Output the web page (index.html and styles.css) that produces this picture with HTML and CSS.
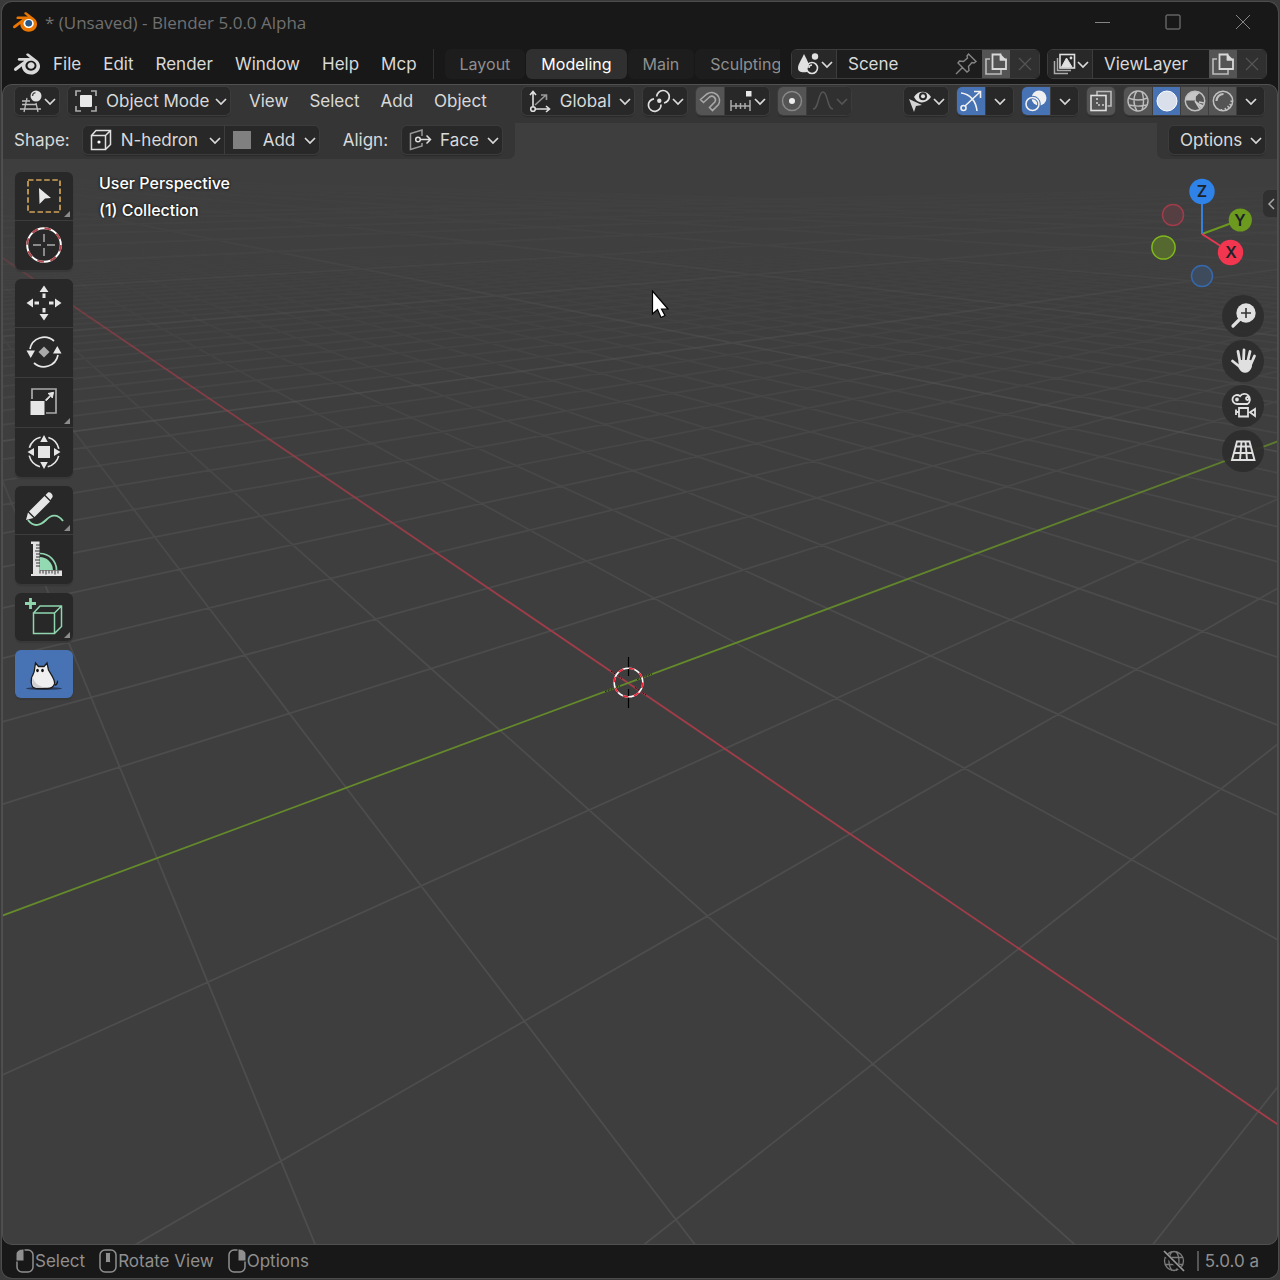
FILE: index.html
```html
<!DOCTYPE html>
<html lang="en">
<head>
    <meta charset="UTF-8">
    <meta name="viewport" content="width=device-width, initial-scale=1.0">
    <title>* (Unsaved) - Blender 5.0.0 Alpha</title>
    <link rel="stylesheet" href="styles.css">
</head>
<body>
    <!-- shared shapes -->
    <svg class="defs" aria-hidden="true">
        <symbol id="chevron" viewBox="0 0 14 14"><path d="M2 5l5 5 5-5" fill="none" stroke="currentColor" stroke-width="1.7"/></symbol>
        <symbol id="close" viewBox="0 0 14 14"><path d="M1 1l12 12M13 1L1 13" fill="none" stroke="currentColor" stroke-width="1.2"/></symbol>
        <symbol id="copy" viewBox="0 0 24 24">
            <path d="M6 7H2v15h15v-4" fill="none" stroke="#bbb" stroke-width="1.6"/>
            <path d="M8.5 2.5h8v5H22V17H8.5z" fill="none" stroke="currentColor" stroke-width="1.8"/>
            <path d="M16 1.5l7 7h-7z" fill="currentColor"/>
        </symbol>
        <symbol id="logo" viewBox="0 0 24 24"><path fill="currentColor" d="M12.51 13.214c.046-.8.438-1.506 1.03-2.006a3.424 3.424 0 0 1 2.212-.79c.85 0 1.631.3 2.211.79.592.5.983 1.206 1.028 2.005.045.823-.285 1.586-.865 2.153a3.389 3.389 0 0 1-2.374.938 3.393 3.393 0 0 1-2.376-.938c-.58-.567-.91-1.33-.865-2.152M7.35 14.831c.006.314.106.922.256 1.398a7.372 7.372 0 0 0 1.593 2.757 8.227 8.227 0 0 0 2.787 2.001 8.947 8.947 0 0 0 3.66.76 8.964 8.964 0 0 0 3.657-.772 8.285 8.285 0 0 0 2.785-2.01 7.428 7.428 0 0 0 1.592-2.762 6.964 6.964 0 0 0 .25-3.074 7.123 7.123 0 0 0-1.016-2.779 7.764 7.764 0 0 0-1.852-2.043h.002L13.566 2.55l-.02-.015c-.492-.378-1.319-.376-1.86.002-.547.382-.609 1.015-.123 1.415l-.001.001 3.126 2.543-9.53.01h-.013c-.788.001-1.545.518-1.695 1.172-.154.665.38 1.217 1.2 1.22V8.9l4.83-.01-8.62 6.617-.034.025c-.813.622-1.075 1.658-.563 2.315.52.667 1.625.668 2.447.004L7.414 14s-.069.52-.063.831zm12.09 1.741c-.97.988-2.326 1.548-3.795 1.55-1.47.004-2.827-.552-3.797-1.538a4.51 4.51 0 0 1-1.036-1.622 4.282 4.282 0 0 1 .282-3.519 4.702 4.702 0 0 1 1.153-1.371c.942-.768 2.141-1.183 3.396-1.185 1.256-.002 2.455.41 3.398 1.175.48.391.87.854 1.152 1.367a4.28 4.28 0 0 1 .522 1.706 4.236 4.236 0 0 1-.239 1.811 4.54 4.54 0 0 1-1.035 1.626z"/></symbol>
    </svg>

    <div class="window">
        <header class="titlebar">
            <svg class="icon app-icon" viewBox="0 0 24 24"><circle cx="15.7" cy="13.2" r="6" fill="#fff"/><use href="#logo"/><circle cx="15.7" cy="13.3" r="3.3" fill="#265787"/></svg>
            <h1>* (Unsaved) - Blender 5.0.0 Alpha</h1>
            <div class="win-buttons">
                <button type="button" aria-label="Minimize"><svg viewBox="0 0 16 16"><path d="M0 8.5h15"/></svg></button>
                <button type="button" aria-label="Maximize"><svg viewBox="0 0 16 16"><rect x="1" y="1" width="14" height="14" rx="1"/></svg></button>
                <button type="button" aria-label="Close"><svg viewBox="0 0 16 16"><path d="M1 1l14 14M15 1L1 15"/></svg></button>
            </div>
        </header>

        <div class="topbar">
            <nav class="menus">
                <button type="button" class="logo-button" aria-label="Blender"><svg class="logo"><use href="#logo"/></svg></button>
                <button type="button">File</button>
                <button type="button">Edit</button>
                <button type="button">Render</button>
                <button type="button">Window</button>
                <button type="button">Help</button>
                <button type="button">Mcp</button>
            </nav>
            <div class="tabs">
                <button type="button">Layout</button>
                <button type="button" class="active">Modeling</button>
                <button type="button">Main</button>
                <button type="button">Sculpting</button>
            </div>
            <div class="datablock scene">
                <button type="button" class="drop" aria-label="Browse scene">
                    <svg class="icon" viewBox="0 0 24 24"><path d="M8 2c2 4 5 9 5 12-2 2-2 4-2 6-5 1-9 0-9-4 0-4 4-9 6-14z" fill="#e0e0e0"/><circle cx="19" cy="4.5" r="3.2" fill="#e0e0e0"/><circle cx="16" cy="16" r="5.5" fill="none" stroke="#e0e0e0" stroke-width="1.6"/><path d="M13 16a3 3 0 0 1 3-3" fill="none" stroke="#e0e0e0" stroke-width="1.5"/></svg>
                    <svg class="chev"><use href="#chevron"/></svg>
                </button>
                <input type="text" value="Scene" aria-label="Scene name">
                <button type="button" class="pin" aria-label="Pin scene"><svg class="icon" viewBox="0 0 24 24" fill="none" stroke="#858585" stroke-width="1.4"><path d="M2 22l7-7M14.500 2l7.500 7.500-2 1.500-2-.5-3.500 4 .5 4-2 1.500L4 11l1.500-2 4 .5L13.500 6 13 4z"/></svg></button>
                <button type="button" class="sq" aria-label="New scene"><svg class="icon"><use href="#copy"/></svg></button>
                <button type="button" class="sq off" aria-label="Unlink scene"><svg class="chev"><use href="#close"/></svg></button>
            </div>
            <div class="datablock layer">
                <button type="button" class="drop" aria-label="Browse view layer">
                    <svg class="icon" viewBox="0 0 24 24" fill="none" stroke="#e0e0e0"><path d="M2.500 9v12.500H16M5.500 6v12.500H19" stroke="#aaa" stroke-width="1.5"/><rect x="8" y="2.5" width="14.5" height="13.5" stroke-width="1.6"/><path d="M9.500 15l5-9 5.500 9z" fill="#e0e0e0"/><circle cx="19" cy="6" r="1.4" fill="#e0e0e0" stroke="none"/></svg>
                    <svg class="chev"><use href="#chevron"/></svg>
                </button>
                <input type="text" value="ViewLayer" aria-label="View layer name">
                <button type="button" class="sq" aria-label="New view layer"><svg class="icon"><use href="#copy"/></svg></button>
                <button type="button" class="sq off" aria-label="Remove view layer"><svg class="chev"><use href="#close"/></svg></button>
            </div>
        </div>

        <main class="editor">
            <svg class="scene-view" id="sceneView" viewBox="2 84 1276 1161" preserveAspectRatio="xMidYMid slice" aria-label="3D viewport">
                <defs>
                    <linearGradient id="minorFade" gradientUnits="userSpaceOnUse" x1="0" y1="172" x2="0" y2="900">
                        <stop offset="0" stop-color="#505050" stop-opacity="0"/>
                        <stop offset=".1" stop-color="#505050" stop-opacity=".06"/>
                        <stop offset=".3" stop-color="#505050" stop-opacity=".4"/>
                        <stop offset=".6" stop-color="#505050" stop-opacity=".75"/>
                        <stop offset="1" stop-color="#505050" stop-opacity=".85"/>
                    </linearGradient>
                    <linearGradient id="majorFade" gradientUnits="userSpaceOnUse" x1="0" y1="172" x2="0" y2="500">
                        <stop offset="0" stop-color="#545454" stop-opacity="0"/>
                        <stop offset=".4" stop-color="#545454" stop-opacity=".35"/>
                        <stop offset="1" stop-color="#545454" stop-opacity=".8"/>
                    </linearGradient>
                    <linearGradient id="xFade" gradientUnits="userSpaceOnUse" x1="0" y1="220" x2="0" y2="640">
                        <stop offset="0" stop-color="#a33c49" stop-opacity=".1"/>
                        <stop offset=".3" stop-color="#a33c49" stop-opacity=".65"/>
                        <stop offset="1" stop-color="#a33c49"/>
                    </linearGradient>
                    <linearGradient id="yFade" gradientUnits="userSpaceOnUse" x1="0" y1="400" x2="0" y2="640">
                        <stop offset="0" stop-color="#648a2a" stop-opacity=".75"/>
                        <stop offset="1" stop-color="#648a2a"/>
                    </linearGradient>
                </defs>
                <path id="minorLines" fill="none" stroke="url(#minorFade)" stroke-width="1.7"/>
                <path id="majorLines" fill="none" stroke="url(#majorFade)" stroke-width="1.7"/>
                <path id="xAxis" fill="none" stroke="url(#xFade)" stroke-width="1.8"/>
                <path id="yAxis" fill="none" stroke="url(#yFade)" stroke-width="1.8"/>
                <!-- 3D cursor -->
                <g fill="none">
                    <path d="M628.500 657v19M628.500 689v19" stroke="#000" stroke-width="1.2"/>
                    <path d="M611 671l11 7.500M635 687.500l11 7.500M605 691.500l15-5.600M637 679.500l15-5.600" stroke="#111" stroke-dasharray="2 1"/>
                    <circle cx="628.5" cy="682.5" r="14.3" stroke="#fff" stroke-width="1.6"/>
                    <circle cx="628.5" cy="682.5" r="14.3" stroke="#ee2336" stroke-width="1.6" stroke-dasharray="5.6 5.63"/>
                </g>
            </svg>

            <div class="header-row">
                <button type="button" class="ctl drop" aria-label="Editor type">
                    <svg class="icon" viewBox="0 0 24 24"><path d="M3 12h8M1 20h21M8 9L5 23M17 14l2 9M3 15.500h15" fill="none" stroke="#bdbdbd" stroke-width="1.3"/><circle cx="17" cy="7" r="5.5" fill="#e0e0e0"/><path d="M13.500 7a3.500 3.500 0 0 1 3-3.300" fill="none" stroke="#444" stroke-width="1.3"/></svg>
                    <svg class="chev"><use href="#chevron"/></svg>
                </button>
                <label class="ctl field w-mode">
                    <svg class="icon" viewBox="0 0 24 24"><path d="M2 7V2h5M17 2h5v5M22 17v5h-5M7 22H2v-5" fill="none" stroke="#aaa" stroke-width="1.7"/><rect x="6" y="6" width="12" height="12" rx="1" fill="#e8e8e8"/></svg>
                    <select aria-label="Mode"><option>Object Mode</option></select>
                    <svg class="chev"><use href="#chevron"/></svg>
                </label>
                <nav class="menus view-menus">
                    <button type="button">View</button>
                    <button type="button">Select</button>
                    <button type="button">Add</button>
                    <button type="button">Object</button>
                </nav>
                <div class="cluster middle">
                    <label class="ctl field w-orient">
                        <svg class="icon" viewBox="0 0 24 24" fill="none" stroke="#e0e0e0" stroke-width="1.6"><path d="M7 16L18 6M13 6h5.500v5" stroke="#999"/><path d="M5 17V3M2 6l3-3.500L8 6M7 20h14M18 17l3.500 3-3.500 3"/><circle cx="5" cy="20" r="2.3"/></svg>
                        <select aria-label="Transform orientation"><option>Global</option></select>
                        <svg class="chev"><use href="#chevron"/></svg>
                    </label>
                    <button type="button" class="ctl drop" aria-label="Pivot point">
                        <svg class="icon" viewBox="0 0 24 24" fill="none" stroke="#e0e0e0" stroke-width="1.7"><path d="M9.700 7.500A6.300 6.300 0 1 1 17 14M14 15.500A6.300 6.300 0 1 1 7 9.800"/><circle cx="12.3" cy="11.8" r="2.2" fill="#e0e0e0" stroke="none"/></svg>
                        <svg class="chev"><use href="#chevron"/></svg>
                    </button>
                    <div class="group">
                        <button type="button" class="sq" aria-label="Snap"><svg class="icon" viewBox="0 0 24 24"><path d="M2.500 10.500L9 5A8 8 0 0 1 20.500 15.500l-6 6-3-3L17 12.700A3.700 3.700 0 0 0 11.500 8l-6 5.500z" fill="none" stroke="#a8a8a8" stroke-width="1.6"/></svg></button>
                        <button type="button" class="drop" aria-label="Snapping">
                            <svg class="icon" viewBox="0 0 24 24"><path d="M2 11v11M21 11v11M2 17h19M7 14v6M11.500 14v6M16 14v6" fill="none" stroke="#aaa" stroke-width="1.5"/><rect x="17" y="2" width="5.5" height="5.5" fill="#e8e8e8"/></svg>
                            <svg class="chev"><use href="#chevron"/></svg>
                        </button>
                    </div>
                    <div class="group">
                        <button type="button" class="sq" aria-label="Proportional editing"><svg class="icon" viewBox="0 0 24 24"><circle cx="12" cy="12" r="9.5" fill="none" stroke="#888" stroke-width="1.5"/><circle cx="12" cy="12" r="3" fill="#eee"/></svg></button>
                        <button type="button" class="drop faded" aria-label="Falloff" disabled>
                            <svg class="icon" viewBox="0 0 24 24"><path d="M2 20c6 0 5-17 10-17s4 17 10 17" fill="none" stroke="currentColor" stroke-width="1.5"/></svg>
                            <svg class="chev"><use href="#chevron"/></svg>
                        </button>
                    </div>
                </div>
                <div class="cluster">
                    <button type="button" class="ctl drop" aria-label="Object visibility">
                        <svg class="icon" viewBox="0 0 24 24"><path d="M6 8c4-7 13-7 17 0-4 6-11 7-15 3z" fill="#e0e0e0"/><circle cx="15" cy="7.3" r="4" fill="#282828"/><circle cx="15" cy="7.3" r="2" fill="#e0e0e0"/><path d="M1 10l13 6-6 1-2 6z" fill="#d2d2d2"/></svg>
                        <svg class="chev"><use href="#chevron"/></svg>
                    </button>
                    <div class="group">
                        <button type="button" class="sq on" aria-label="Show gizmo"><svg class="icon" viewBox="0 0 24 24" fill="none" stroke="#f0f0f0" stroke-width="1.6"><path d="M2 4c9 1 15 8 16 18M6 17L21 3M15 2.500h6.500V9"/><circle cx="4.5" cy="19" r="2.5"/></svg></button>
                        <button type="button" class="sq dark" aria-label="Gizmos"><svg class="chev"><use href="#chevron"/></svg></button>
                    </div>
                    <div class="group">
                        <button type="button" class="sq on" aria-label="Show overlays"><svg class="icon" viewBox="0 0 24 24"><circle cx="15" cy="9" r="7.5" fill="#f0f0f0"/><circle cx="8.5" cy="15" r="6.5" fill="none" stroke="#4772b3" stroke-width="3.5"/><circle cx="8.5" cy="15" r="6.5" fill="none" stroke="#f0f0f0" stroke-width="1.6"/></svg></button>
                        <button type="button" class="sq dark" aria-label="Overlays"><svg class="chev"><use href="#chevron"/></svg></button>
                    </div>
                    <button type="button" class="ctl sq" aria-label="Toggle X-Ray"><svg class="icon" viewBox="0 0 24 24" fill="none" stroke="#e0e0e0" stroke-width="1.6"><path d="M8 6V2.500h14V17h-3.500" stroke="#bbb"/><rect x="2" y="6.5" width="15" height="15"/><path d="M8 9v7h7" stroke-dasharray="2 2" stroke="#ccc"/></svg></button>
                    <div class="group">
                        <button type="button" class="sq" aria-label="Wireframe"><svg class="icon" viewBox="0 0 24 24" fill="none" stroke="#bdbdbd" stroke-width="1.4"><circle cx="12" cy="12" r="10"/><path d="M2.500 9c6 2.500 13 2.500 19 0M3 16c6 1.500 12 1.500 18 0M11 2c-4 5-4 14 0 20M16 3c2 5 2 13 0 18"/></svg></button>
                        <button type="button" class="sq on" aria-label="Solid"><svg class="icon" viewBox="0 0 24 24"><circle cx="12" cy="12" r="10" fill="#d9e0ec" stroke="#fff"/></svg></button>
                        <button type="button" class="sq" aria-label="Material preview"><svg class="icon" viewBox="0 0 24 24"><path d="M12 12H2.500A9.500 9.500 0 0 1 17 3.500L12.500 8z" fill="#c6c6c6"/><path d="M12 2.500V12l7 7" fill="none" stroke="#c6c6c6" stroke-width="1.5"/><path d="M3 12h9v9.500" fill="none" stroke="#545454"/><path d="M12 12H2.500A9.500 9.500 0 0 0 12 21.500z" fill="#545454"/><path d="M12 12l5 8M14 14l6 3M16 13l5 1M17 16l2 3" stroke="#c6c6c6" stroke-width="1.5"/><circle cx="12" cy="12" r="9.7" fill="none" stroke="#bdbdbd" stroke-width="1.5"/></svg></button>
                        <button type="button" class="sq" aria-label="Rendered"><svg class="icon" viewBox="0 0 24 24" fill="none" stroke="#c0c0c0"><circle cx="12" cy="12" r="9.7" stroke-width="1.5"/><path d="M5.500 12c0-4 3-7 7-7" stroke-width="2.2"/><path d="M19.500 12l2 .5M18.500 15l2 1.500M16.500 17l2 2M14 19l1 2M10.500 20v2" stroke-width="1.5"/></svg></button>
                        <button type="button" class="sq dark" aria-label="Shading"><svg class="chev"><use href="#chevron"/></svg></button>
                    </div>
                </div>
            </div>

            <div class="tool-row">
                <div class="tool-settings left">
                    <label for="shape">Shape:</label>
                    <div class="joined">
                        <div class="field w-shape">
                            <svg class="icon" viewBox="0 0 24 24" fill="none" stroke="#e0e0e0" stroke-width="1.5"><path d="M2.500 7.500h14v14h-14zM2.500 7.500L7 2.500h14.500v14l-5 5M16.500 7.500l5-5"/><circle cx="10" cy="14" r="1.6" fill="#fff" stroke="none"/></svg>
                            <select id="shape"><option>N-hedron</option></select>
                            <svg class="chev"><use href="#chevron"/></svg>
                        </div>
                        <div class="field w-bool">
                            <svg class="icon" viewBox="0 0 24 24"><rect x="2" y="3" width="18" height="18" fill="#808080"/></svg>
                            <select aria-label="Operation"><option>Add</option></select>
                            <svg class="chev"><use href="#chevron"/></svg>
                        </div>
                    </div>
                    <label for="align" class="align-label">Align:</label>
                    <div class="ctl field w-align">
                        <svg class="icon" viewBox="0 0 24 24" fill="none" stroke-width="1.5"><path d="M14 8V2L2.500 5.500v16L14 18v-3" stroke="#999"/><circle cx="10" cy="11.5" r="2.3" stroke="#e0e0e0"/><path d="M12.500 11.500H22M18.500 7.500l4 4-4 4" stroke="#e0e0e0"/></svg>
                        <select id="align"><option>Face</option></select>
                        <svg class="chev"><use href="#chevron"/></svg>
                    </div>
                </div>
                <div class="tool-settings right">
                    <button type="button" class="ctl options">Options<svg class="chev"><use href="#chevron"/></svg></button>
                </div>
            </div>

            <div class="viewport">
                <div class="toolbar">
                    <div class="tool-group">
                        <button type="button" class="more" aria-label="Select Box"><svg viewBox="0 0 40 40"><rect x="4" y="4" width="32" height="32" fill="none" stroke="#d0a357" stroke-width="1.7" stroke-dasharray="5.5 2.6"/><path d="M15 12l12 10-6 .5L15.500 28z" fill="#e8e8e8"/></svg></button>
                        <button type="button" aria-label="Cursor"><svg viewBox="0 0 40 40" fill="none"><circle cx="20" cy="20" r="16.8" stroke="#fff" stroke-width="2"/><circle cx="20" cy="20" r="16.8" stroke="#b04a50" stroke-width="2" stroke-dasharray="6.6 6.595"/><path d="M20 9v8M20 23v8M9 20h8M23 20h8" stroke="#aaa" stroke-width="1.5"/></svg></button>
                    </div>
                    <div class="tool-group">
                        <button type="button" aria-label="Move"><svg viewBox="0 0 40 40" fill="#e6e6e6"><path d="M20 2.500l4.500 6.500h-9zM20 37.500l4.500-6.500h-9zM2.500 20L9 15.500v9zM37.500 20L31 15.500v9zM18.500 10.500h3v4.500h-3zM18.500 25h3v4.500h-3zM10.500 18.500H15v3h-4.500zM25 18.500h4.500v3H25z"/></svg></button>
                        <button type="button" aria-label="Rotate"><svg viewBox="0 0 40 40"><path d="M6 17a14.500 14.500 0 0 1 24-8M34 23a14.500 14.500 0 0 1-24 8" fill="none" stroke="#e6e6e6" stroke-width="1.7"/><path d="M2.500 18.500h8.500L6.700 26zM29 21.500h8.500L33.300 14z" fill="#e6e6e6"/><path d="M20 14.500l5.500 5.500-5.500 5.500-5.500-5.500z" fill="#aaa"/></svg></button>
                        <button type="button" class="more" aria-label="Scale"><svg viewBox="0 0 40 40"><path d="M8 17V7h24v24H22" fill="none" stroke="#aaa" stroke-width="1.7"/><rect x="6.5" y="19" width="14" height="14" fill="#e6e6e6"/><path d="M21.500 18l5-5-2.500-1.500 5.500-1.200-1.200 5.700-1.500-2.200-4.500 5z" fill="#e6e6e6" stroke="#e6e6e6"/></svg></button>
                        <button type="button" aria-label="Transform"><svg viewBox="0 0 40 40"><circle cx="20" cy="20" r="15.2" fill="none" stroke="#e6e6e6" stroke-width="1.6" stroke-dasharray="15.9 7.975" stroke-dashoffset="-4"/><path d="M20 3l3.800 7h-7.600zM20 37l3.800-7h-7.600zM3.500 20L10 16v8zM36.500 20L30 16v8zM14 14h12v12H14z" fill="#e6e6e6"/></svg></button>
                    </div>
                    <div class="tool-group">
                        <button type="button" class="more" aria-label="Annotate"><svg viewBox="0 0 40 40"><path d="M4 30c6 8 13 5 18 0s11-7 17 1" fill="none" stroke="#8fd6ae" stroke-width="1.9"/><path d="M2 30l2-7.500 5.500 5.500zM5 21.500L20.500 6l5.500 5.500L10.500 27zM21.500 5L24 2.500c2-1 5.500 2 4.500 4.500L26.500 10z" fill="#e6e6e6"/></svg></button>
                        <button type="button" aria-label="Measure"><svg viewBox="0 0 40 40"><path d="M16 14.500a16.500 16.500 0 0 1 16.500 16.500" fill="none" stroke="#8fd6ae" stroke-width="1.7"/><path d="M15.500 18a13.500 13.500 0 0 1 13.500 13H15.500z" fill="#93d9b1"/><path d="M7 2.500h8.500v29H38V37H7v-2h2V5H7z" fill="#e2e2e2"/><path d="M12 6h4M12 9h4M11 12h5M12 15h4M12 18h4M11 21h5M12 24h4M12 27h4M16 31.500v3M19 31.500v3M22 31.500v4M25 31.500v3M28 31.500v3M31 31.500v4M34 31.500v3" stroke="#333"/></svg></button>
                    </div>
                    <div class="tool-group">
                        <button type="button" class="more" aria-label="Add Cube"><svg viewBox="0 0 40 40" fill="none" stroke="#8fd6ae"><path d="M6.500 1v11M1 6.500h11" stroke-width="2.8"/><path d="M9.500 16h21v20.500h-21zM9.500 16L16 9h21.500v20.500l-7 7M30.500 16l7-7" stroke-width="1.5"/></svg></button>
                    </div>
                    <div class="tool-group">
                        <button type="button" class="active" aria-label="Cat tool"><svg viewBox="0 0 40 40"><ellipse cx="20" cy="34.5" rx="18" ry="1.5" fill="#2a3a58"/><path d="M31 31c3 0 2-4 3-4" fill="none" stroke="#1b1b1b" stroke-width="1.4"/><path d="M11.500 9l3 3.500h5.500l3-3.500 1.500 7c3 5 7 10 6 14-1 3-3 4.500-7 4.500H12c-4 0-5.500-5-4.500-10 .7-3 3-6 3-9z" fill="#efeff0" stroke="#1b1b1b" stroke-width="1.3"/><path d="M8.500 22c-1 5 0 11 4 11.500h8C14 32 10 29 8.500 22z" fill="#cfcfd2"/><ellipse cx="13.5" cy="16.5" rx="1.3" ry="1.7" fill="#111"/><ellipse cx="18.5" cy="16.5" rx="1.3" ry="1.7" fill="#111"/></svg></button>
                    </div>
                </div>

                <div class="view-info">
                    <p>User Perspective</p>
                    <p>(1) Collection</p>
                </div>

                <div class="navigation">
                    <svg class="gizmo" viewBox="0 0 110 120">
                        <circle cx="25" cy="43" r="10.5" fill="#553f43" stroke="#a03c4a" stroke-width="1.5"/>
                        <circle cx="54" cy="104" r="10.5" fill="#3e4b5c" stroke="#3569ad" stroke-width="1.5"/>
                        <circle cx="15.5" cy="75.5" r="11.6" fill="#54682f" stroke="#80b91c" stroke-width="1.5"/>
                        <path d="M54 62l38-14" stroke="#6c981f" stroke-width="2"/>
                        <path d="M54 62V20" stroke="#3380dd" stroke-width="2"/>
                        <path d="M54 62l28 18" stroke="#e63850" stroke-width="2"/>
                        <circle cx="92.3" cy="48" r="11.6" fill="#6b9a1f"/>
                        <circle cx="54" cy="19.5" r="12.7" fill="#2f83e8"/>
                        <circle cx="82.5" cy="80.5" r="12.7" fill="#f23650"/>
                        <g class="axis-names"><text x="54" y="25">Z</text><text x="92" y="54">Y</text><text x="83" y="86">X</text></g>
                    </svg>
                    <button type="button" aria-label="Zoom"><svg viewBox="0 0 30 30"><circle cx="18" cy="12" r="9.7" fill="#e0e0e0"/><path d="M12 18l-7 7" stroke="#e0e0e0" stroke-width="3.2" stroke-linecap="round"/><path d="M13 12h10M18 7v10" stroke="#333" stroke-width="1.6"/></svg></button>
                    <button type="button" aria-label="Pan"><svg viewBox="0 0 30 30" fill="none" stroke="#e0e0e0" stroke-width="2.8" stroke-linecap="round"><path d="M12 16L10 5.500M15.500 15L16 4M19.500 16L22 5.500M22.500 19L26.500 10M12 21l-7.500-6"/><path d="M12 15.500h10l.5 5c-2 6-7.500 6.500-10.500 1z" fill="#e0e0e0" stroke-linejoin="round"/></svg></button>
                    <button type="button" aria-label="Camera view"><svg viewBox="0 0 30 30" fill="none" stroke="#e0e0e0" stroke-width="1.8"><path d="M9 13a4.500 4.500 0 1 1 3-7.800 5.500 5.500 0 1 1 7.500 7.800z"/><circle cx="9" cy="8.5" r="1"/><circle cx="19.500" cy="7.5" r="1.500"/><path d="M11 17h9v8.500h-9zM8 18.500v5.500M10.500 21H8M27 18l-5 3.300 5 3.700z"/></svg></button>
                    <button type="button" aria-label="Toggle perspective"><svg viewBox="0 0 30 30" fill="none" stroke="#e0e0e0" stroke-width="1.9"><path d="M9 5.500h12.500L26.500 24H4zM7.500 10.500h15.500M6 17h18.500M13.500 5.500L12 24M17.500 5.500l1.500 18.500"/></svg></button>
                </div>
            </div>
            <button type="button" class="sidebar-toggle" aria-label="Show sidebar"><svg viewBox="0 0 8 12"><path d="M7 1L2 6l5 5" fill="none" stroke="#aaa" stroke-width="1.5"/></svg></button>
            <svg class="pointer" viewBox="0 0 20 30" aria-hidden="true"><path d="M2.500 1v23l5-4.500 3.500 8 4-2-3.500-6.500h6.500z" fill="#fff" stroke="#000" stroke-width="1.2"/></svg>
        </main>

        <footer class="statusbar">
            <span class="hint"><svg viewBox="0 0 20 26"><rect x="2" y="2" width="16" height="22" rx="5"/><path class="press" d="M9 1v12H1V7c0-4 3-6 8-6z"/></svg>Select</span>
            <span class="hint"><svg viewBox="0 0 20 26"><rect x="2" y="2" width="16" height="22" rx="5"/><rect class="press" x="7.5" y="4.5" width="5" height="10" rx="1"/></svg>Rotate View</span>
            <span class="hint"><svg viewBox="0 0 20 26"><rect x="2" y="2" width="16" height="22" rx="5"/><path class="press" d="M11 1v12h8V7c0-4-3-6-8-6z"/></svg>Options</span>
            <span class="version">
                <svg class="icon" viewBox="0 0 24 24" fill="none" stroke="#7c7c7c" stroke-width="1.3"><circle cx="12" cy="12" r="9.5"/><path d="M3 8.500h18M3 15.500h18M10 2.500c-4 5-4 14 0 19M14 2.500c4 5 4 14 0 19"/><path d="M1 3l20 19" stroke="#181818" stroke-width="4"/><path d="M2 2l20 20" stroke="#999" stroke-width="1.7"/></svg>
                <span class="version-text">5.0.0 a</span>
            </span>
        </footer>
    </div>

    <script>
        // floor grid: origin plus the two vanishing points of the ground axes
        const origin = [628, 683];
        const vanishX = [-124, 172];
        const vanishY = [2002, 172];
        const stepX = 0.114;
        const stepY = 0.0851;
        const lineCount = 90;

        function project(x, y) {
            const a = x * stepX;
            const b = y * stepY;
            const w = 1 + a + b;
            return [0, 1].map(i => ((origin[i] + a * vanishX[i] + b * vanishY[i]) / w).toFixed(1));
        }

        // line at a constant y, from just before the camera to far away
        function lineAlongX(k) {
            const near = (0.05 - 1 - k * stepY) / stepX;
            return 'M' + project(near, k) + 'L' + project(20000, k);
        }

        function lineAlongY(k) {
            const near = (0.05 - 1 - k * stepX) / stepY;
            return 'M' + project(k, near) + 'L' + project(k, 20000);
        }

        let minor = '';
        let major = '';
        for (let k = -lineCount; k <= lineCount; k++) {
            if (k === 0) continue;
            if (k % 10 === 0) {
                major += lineAlongX(k) + lineAlongY(k);
            } else {
                minor += lineAlongX(k) + lineAlongY(k);
            }
        }
        document.getElementById('minorLines').setAttribute('d', minor);
        document.getElementById('majorLines').setAttribute('d', major);
        document.getElementById('xAxis').setAttribute('d', lineAlongX(0));
        document.getElementById('yAxis').setAttribute('d', lineAlongY(0));
    </script>
</body>
</html>
```
FILE: styles.css
```css
* {
    box-sizing: border-box;
}
body {
    margin: 0;
    padding: 2px;
    min-height: 100vh;
    display: flex;
    background-color: #3a3a3a;
    color: #d9d9d9;
    font-family: Inter, sans-serif;
    font-size: 17px;
}
button, input, select {
    font: inherit;
    color: inherit;
    border: none;
    background: none;
    margin: 0;
    padding: 0;
}
button {
    display: flex;
    align-items: center;
    justify-content: center;
    flex-shrink: 0;
}
svg {
    display: block;
    flex-shrink: 0;
}
.defs {
    position: absolute;
    width: 0;
    height: 0;
}
.icon {
    width: 24px;
    height: 24px;
}
.chev {
    width: 14px;
    height: 14px;
}
.window {
    flex: 1;
    min-width: 0;
    display: flex;
    flex-direction: column;
    background-color: #181818;
    border-radius: 10px;
    box-shadow: 0 0 0 1px #4c4c4c;
    overflow: hidden;
}

/* title bar */
.titlebar {
    height: 42px;
    display: flex;
    align-items: center;
    padding: 0 0 2px 11px;
}
.titlebar h1 {
    margin: 0 auto 0 8px;
    font-family: "Open Sans", sans-serif;
    font-size: 17px;
    font-weight: 400;
    color: #707070;
}
.app-icon {
    color: #ea7600;
}
.win-buttons {
    display: flex;
}
.win-buttons button {
    width: 70px;
    height: 40px;
}
.win-buttons svg {
    width: 16px;
    height: 16px;
    fill: none;
    stroke: #858585;
    stroke-width: 1;
}

/* top bar */
.topbar {
    height: 40px;
    display: flex;
    align-items: center;
    padding: 0 11px 0 12px;
}
.menus {
    display: flex;
}
.menus button {
    height: 30px;
    padding: 0 11px;
}
.menus .logo-button {
    padding: 0 2px 0 0;
}
.logo {
    width: 26px;
    height: 26px;
}
.tabs {
    flex: 1;
    min-width: 0;
    display: flex;
    gap: 1px;
    margin: 0 11px 0 5px;
    padding-left: 11px;
    overflow: hidden;
    border-left: 1px solid #303030;
    font-size: 16px;
}
.tabs button {
    height: 30px;
    padding: 0 15px;
    border-radius: 6px;
    background-color: #1d1d1d;
    color: #8f8f8f;
}
.tabs .active {
    background-color: #303030;
    color: #fff;
}
.datablock {
    height: 30px;
    display: flex;
    border: 1px solid #3d3d3d;
    border-radius: 6px;
    background-color: #1d1d1d;
    overflow: hidden;
}
.datablock + .datablock {
    margin-left: 7px;
}
.scene {
    width: 249px;
}
.layer {
    width: 220px;
}
.datablock input {
    flex: 1;
    min-width: 0;
    padding-left: 11px;
    border-left: 1px solid #3d3d3d;
}
.datablock .drop {
    background-color: #282828;
}
.pin {
    width: 32px;
}

/* header controls */
.drop {
    width: 44px;
    padding-left: 2px;
}
.sq {
    width: 28px;
    background-color: #545454;
}
.off {
    width: 29px;
    background-color: #303030;
    color: #555;
}
.on {
    background-color: #4772b3;
}
.dark {
    background-color: #282828;
}
.ctl, .group, .joined {
    height: 28px;
    border-radius: 5px;
    box-shadow: 0 0 0 1px #3c3c3c, 0 2px 1px #2a2a2a;
}
.ctl {
    background-color: #282828;
}
.ctl.sq {
    background-color: #545454;
}
.group, .joined {
    display: flex;
    overflow: hidden;
    background-color: #282828;
}
.group > button + button, .joined > div + div {
    border-left: 1px solid #3d3d3d;
}
.group .drop {
    width: 45px;
}
.faded {
    background-color: #303030;
    color: #555;
}
.field {
    display: flex;
    align-items: center;
    padding: 0 2px 0 6px;
}
.field select {
    flex: 1;
    min-width: 0;
    height: 28px;
    padding-left: 8px;
    appearance: none;
}
.w-mode {
    width: 162px;
}
.w-orient {
    width: 112px;
}
.w-shape {
    width: 141px;
}
.w-bool {
    width: 95px;
}
.w-align {
    width: 100px;
}

/* editor area */
.editor {
    flex: 1;
    position: relative;
    display: flex;
    flex-direction: column;
    background-color: #3e3e3e;
    border-radius: 10px;
    overflow: hidden;
}
.editor::after {
    content: "";
    position: absolute;
    inset: 0;
    border: 1px solid #505050;
    border-radius: 10px;
    pointer-events: none;
}
.scene-view {
    position: absolute;
    inset: 0;
    width: 100%;
    height: 100%;
}
.header-row {
    position: relative;
    height: 39px;
    display: flex;
    align-items: center;
    gap: 9px;
    padding: 0 14px 5px 13px;
    background-color: #353535;
}
.view-menus {
    gap: 1px;
    margin-right: 16px;
}
.view-menus button {
    padding: 0 10px;
}
.cluster {
    display: flex;
    gap: 9px;
}
.middle {
    margin-right: auto;
}
.tool-row {
    position: relative;
    display: flex;
    justify-content: space-between;
}
.tool-settings {
    height: 36px;
    display: flex;
    align-items: center;
    background-color: #353535;
    padding: 0 13px 2px 12px;
}
.left {
    border-bottom-right-radius: 7px;
}
.right {
    border-bottom-left-radius: 7px;
}
.joined {
    margin-left: 13px;
}
.align-label {
    margin: 0 14px 0 24px;
}
.options {
    width: 96px;
    padding: 0 2px 0 11px;
    justify-content: space-between;
}

/* viewport overlays */
.viewport {
    position: relative;
    flex: 1;
    display: flex;
    align-items: flex-start;
    padding: 13px 14px 0 13px;
}
.toolbar {
    display: flex;
    flex-direction: column;
    gap: 9px;
}
.tool-group {
    border-radius: 6px;
    box-shadow: 0 2px 1px #383838;
    overflow: hidden;
}
.tool-group button {
    position: relative;
    width: 58px;
    height: 48px;
    background-color: #282828;
}
.tool-group button + button {
    height: 50px;
    padding-bottom: 2px;
    border-top: 1px solid #3d3d3d;
}
.tool-group svg {
    width: 40px;
    height: 40px;
}
.tool-group .active {
    background-color: #4772b3;
}
.more::after {
    content: "";
    position: absolute;
    right: 3px;
    bottom: 3px;
    border: 3px solid #8c8c8c;
    border-top-color: transparent;
    border-left-color: transparent;
}
.view-info {
    margin: -2px auto 0 26px;
    color: #fff;
    font-size: 16px;
    font-weight: 500;
    line-height: 27px;
    text-shadow: 0 0 3px #000;
}
.view-info p {
    margin: 0;
}
.navigation {
    display: flex;
    flex-direction: column;
    align-items: flex-end;
    gap: 3px;
}
.gizmo {
    width: 110px;
    height: 120px;
    margin-right: 6px;
}
.axis-names {
    font-size: 16px;
    font-weight: 600;
    text-anchor: middle;
    fill: #1c2228;
}
.navigation button {
    width: 42px;
    height: 42px;
    border-radius: 50%;
    background-color: #2c2c2ce6;
}
.navigation button svg {
    width: 30px;
    height: 30px;
}
.sidebar-toggle {
    position: absolute;
    top: 106px;
    right: 0;
    width: 15px;
    height: 27px;
    border-radius: 6px 0 0 6px;
    background-color: #303030;
}
.sidebar-toggle svg {
    width: 8px;
    height: 12px;
}
.pointer {
    position: absolute;
    left: 648px;
    top: 206px;
    width: 20px;
    height: 30px;
}

/* status bar */
.statusbar {
    height: 33px;
    display: flex;
    align-items: center;
    gap: 13px;
    padding: 0 19px 2px 13px;
    color: #8f8f8f;
}
.hint {
    display: flex;
    align-items: center;
}
.hint svg {
    width: 20px;
    height: 26px;
    fill: none;
    stroke: #8f8f8f;
    stroke-width: 1.5;
}
.hint .press {
    fill: #8f8f8f;
    stroke: #181818;
    stroke-width: 1;
}
.version {
    margin-left: auto;
    display: flex;
    align-items: center;
    gap: 11px;
}
.version-text {
    padding-left: 6px;
    border-left: 2px solid #555;
}
```
